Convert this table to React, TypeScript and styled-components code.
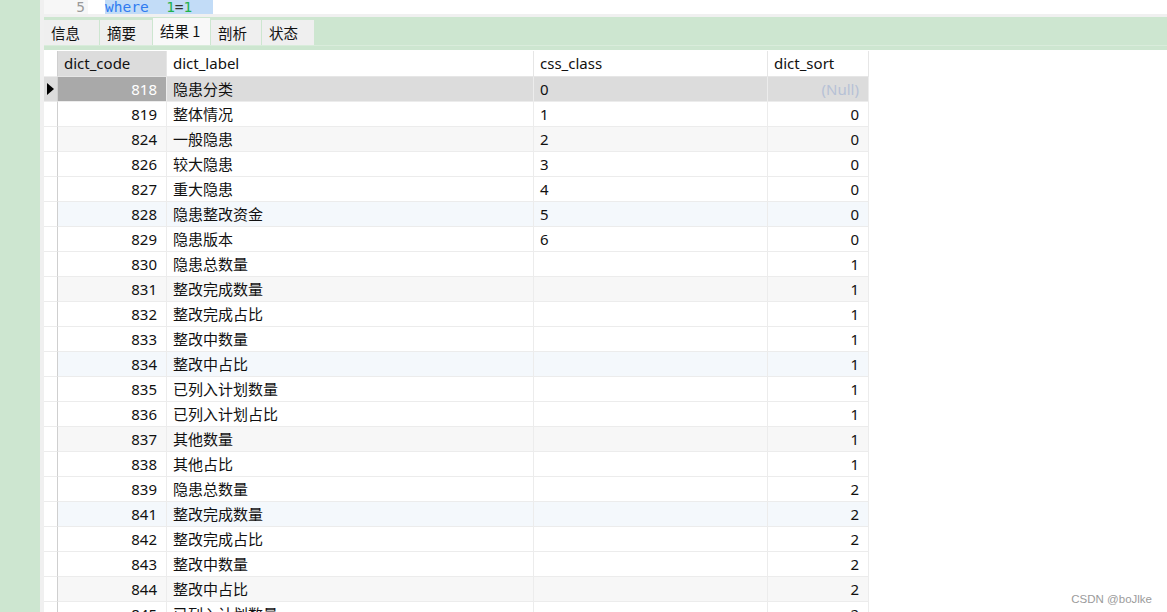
import React from "react";
import styled, { createGlobalStyle } from "styled-components";

const GlobalStyle = createGlobalStyle`
  html, body { margin: 0; padding: 0; background: #fff; }
  body { font-family: "Noto Sans", "Noto Sans CJK SC", sans-serif; }
  * { box-sizing: border-box; }
`;

const Page = styled.div`
  display: flex;
  width: 1167px;
  height: 612px;
  overflow: hidden;
  background: #fff;
  position: relative;
`;

const SideStrip = styled.div`
  width: 40px;
  flex: none;
  background: #cde6d0;
`;

const Gap = styled.div`
  width: 4px;
  flex: none;
  background: #f0f0f0;
`;

const Main = styled.div`
  flex: 1;
  display: flex;
  flex-direction: column;
  min-width: 0;
  & > * { flex: none; }
`;

const EditorLine = styled.div`
  height: 14px;
  display: flex;
  overflow: hidden;
  font-family: "DejaVu Sans Mono", "Liberation Mono", monospace;
  font-size: 14.5px;
  line-height: 14px;
`;

const Gutter = styled.div`
  width: 44px;
  background: #f7f7f7;
  color: #9a9a9a;
  text-align: right;
  padding-right: 3px;
`;

const CodeArea = styled.div`
  padding-left: 17px;
  display: flex;
`;

const Selection = styled.span`
  background: #c2dcf7;
  width: 108px;
  white-space: pre;
  display: inline-block;
  height: 14px;
`;

const Kw = styled.span<{ $c: string }>`
  color: ${(p) => p.$c};
`;

const Divider = styled.div`
  height: 3px;
  background: #f0f0f0;
`;

const TabBar = styled.div`
  height: 34px;
  background: #cde6d0;
  display: flex;
  align-items: flex-start;
  padding-top: 1px;
  gap: 1px;
  position: relative;
  border-bottom: 1px solid #fff;
`;

const TabLine = styled.div`
  position: absolute;
  left: 0;
  right: 0;
  top: 28px;
  height: 1px;
  background: #d9ecdb;
`;

const Tab = styled.div<{ $active?: boolean; $w: number }>`
  width: ${(p) => p.$w}px;
  height: ${(p) => (p.$active ? 27 : 25)}px;
  margin-top: ${(p) => (p.$active ? 0 : 2)}px;
  background: ${(p) => (p.$active ? "#f8f8f8" : "#efefef")};
  font-family: "Noto Sans CJK SC", sans-serif;
  font-size: 14.5px;
  color: #111;
  padding-left: 7px;
  line-height: ${(p) => (p.$active ? 26 : 25)}px;
  position: relative;
  z-index: 1;
`;

const Grid = styled.div`
  display: grid;
  grid-template-columns: 14px 109px 367px 234px 101px;
  grid-template-rows: 26px;
  grid-auto-rows: 25px;
  width: 825px;
  font-size: 15px;
  color: #111;
`;

const HeadCell = styled.div<{ $shade?: boolean }>`
  background: ${(p) => (p.$shade ? "#dcdcdc" : "#fff")};
  border-right: 1px solid #e6e6e6;
  border-bottom: 1px solid #e6e6e6;
  padding-left: 6px;
  line-height: 25px;
  white-space: nowrap;
`;

const IndCell = styled.div<{ $bg: string }>`
  background: ${(p) => p.$bg};
  border-right: 1px solid #cfcfcf;
  border-bottom: 1px solid #ececec;
  display: flex;
  align-items: center;
  justify-content: center;
`;

const Cell = styled.div<{ $bg: string; $align?: "left" | "right"; $color?: string }>`
  background: ${(p) => p.$bg};
  color: ${(p) => p.$color || "#111"};
  border-right: 1px solid #ececec;
  border-bottom: 1px solid #ececec;
  text-align: ${(p) => p.$align || "left"};
  padding: ${(p) => (p.$align === "right" ? "0 9px 0 0" : "0 0 0 6px")};
  line-height: 24px;
  white-space: nowrap;
  overflow: hidden;
  font-family: "Noto Sans", "Noto Sans CJK SC", sans-serif;
`;

const Pointer = styled.svg`
  width: 7px;
  height: 12px;
`;

const Watermark = styled.div`
  position: absolute;
  right: 15px;
  bottom: 7px;
  font-family: "Liberation Sans", Arial, sans-serif;
  font-size: 11.5px;
  color: #9b9b9b;
`;

type Row = { code: number; label: string; css: string; sort: string };

const rows: Row[] = [
  { code: 818, label: "隐患分类", css: "0", sort: "(Null)" },
  { code: 819, label: "整体情况", css: "1", sort: "0" },
  { code: 824, label: "一般隐患", css: "2", sort: "0" },
  { code: 826, label: "较大隐患", css: "3", sort: "0" },
  { code: 827, label: "重大隐患", css: "4", sort: "0" },
  { code: 828, label: "隐患整改资金", css: "5", sort: "0" },
  { code: 829, label: "隐患版本", css: "6", sort: "0" },
  { code: 830, label: "隐患总数量", css: "", sort: "1" },
  { code: 831, label: "整改完成数量", css: "", sort: "1" },
  { code: 832, label: "整改完成占比", css: "", sort: "1" },
  { code: 833, label: "整改中数量", css: "", sort: "1" },
  { code: 834, label: "整改中占比", css: "", sort: "1" },
  { code: 835, label: "已列入计划数量", css: "", sort: "1" },
  { code: 836, label: "已列入计划占比", css: "", sort: "1" },
  { code: 837, label: "其他数量", css: "", sort: "1" },
  { code: 838, label: "其他占比", css: "", sort: "1" },
  { code: 839, label: "隐患总数量", css: "", sort: "2" },
  { code: 841, label: "整改完成数量", css: "", sort: "2" },
  { code: 842, label: "整改完成占比", css: "", sort: "2" },
  { code: 843, label: "整改中数量", css: "", sort: "2" },
  { code: 844, label: "整改中占比", css: "", sort: "2" },
  { code: 845, label: "已列入计划数量", css: "", sort: "2" },
];

const rowBg = (i: number) => {
  if (i === 0) return "#dcdcdc";
  if (i % 6 === 5) return "#f4f8fc";
  if (i % 6 === 2) return "#f7f7f7";
  return "#ffffff";
};

const tabs = [
  { t: "信息", w: 55 },
  { t: "摘要", w: 52 },
  { t: "结果 1", w: 57, active: true },
  { t: "剖析", w: 50 },
  { t: "状态", w: 52 },
];

export default function App() {
  return (
    <>
      <GlobalStyle />
      <Page>
        <SideStrip />
        <Gap />
        <Main>
          <EditorLine>
            <Gutter>5</Gutter>
            <CodeArea>
              <Selection>
                <Kw $c="#2f7bf0">where</Kw>
                {"  "}
                <Kw $c="#22b14c">1</Kw>
                <Kw $c="#333">=</Kw>
                <Kw $c="#22b14c">1</Kw>
              </Selection>
            </CodeArea>
          </EditorLine>
          <Divider />
          <TabBar>
            <TabLine />
            {tabs.map((t) => (
              <Tab key={t.t} $w={t.w} $active={t.active}>
                {t.t}
              </Tab>
            ))}
          </TabBar>
          <Grid>
            <IndCell $bg="#fff" />
            <HeadCell $shade>dict_code</HeadCell>
            <HeadCell>dict_label</HeadCell>
            <HeadCell>css_class</HeadCell>
            <HeadCell>dict_sort</HeadCell>
            {rows.map((r, i) => {
              const bg = rowBg(i);
              const sel = i === 0;
              return (
                <React.Fragment key={r.code}>
                  <IndCell $bg={sel ? "#dcdcdc" : "#fff"}>
                    {sel && (
                      <Pointer viewBox="0 0 7 12">
                        <path d="M0 0 L7 6 L0 12 Z" fill="#000" />
                      </Pointer>
                    )}
                  </IndCell>
                  <Cell $bg={sel ? "#a9a9a9" : bg} $align="right" $color={sel ? "#fff" : "#111"}>
                    {r.code}
                  </Cell>
                  <Cell $bg={bg}>{r.label}</Cell>
                  <Cell $bg={bg}>{r.css}</Cell>
                  <Cell
                    $bg={bg}
                    $align="right"
                    $color={r.sort === "(Null)" ? "#b6c1d6" : "#111"}
                  >
                    {r.sort}
                  </Cell>
                </React.Fragment>
              );
            })}
          </Grid>
        </Main>
        <Watermark>CSDN @boJlke</Watermark>
      </Page>
    </>
  );
}
